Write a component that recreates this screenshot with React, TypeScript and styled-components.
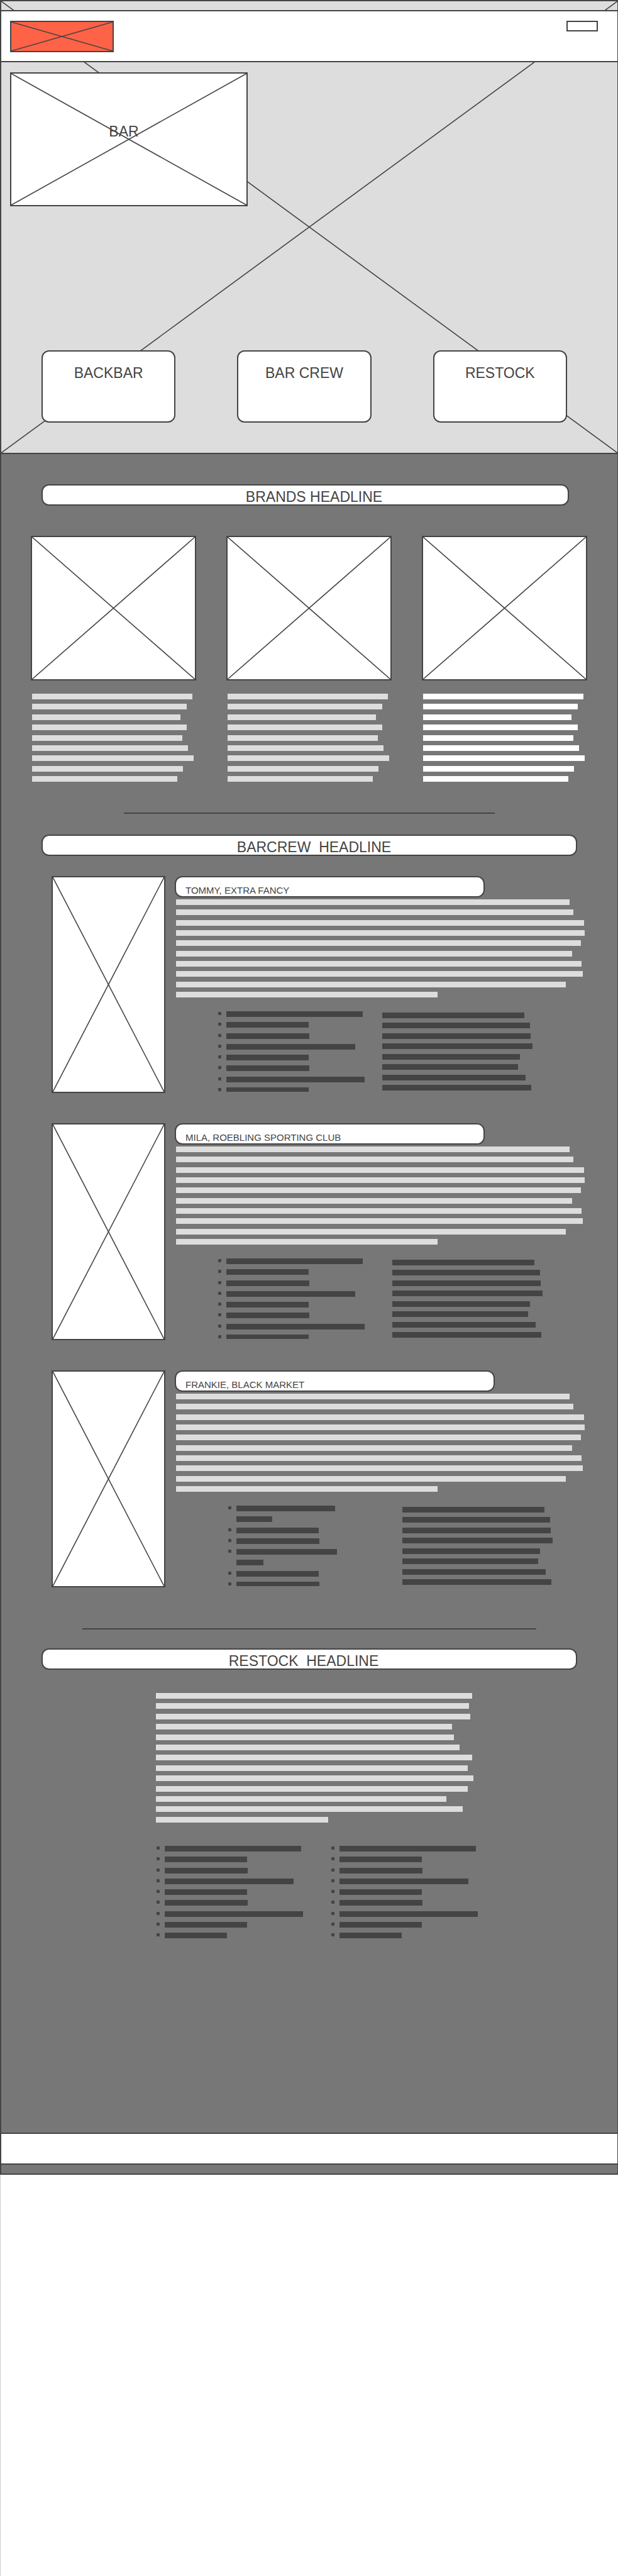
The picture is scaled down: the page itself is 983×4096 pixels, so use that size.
import React from 'react';
import styled, { createGlobalStyle } from 'styled-components';

const ink = '#444444';
const slate = '#777777';
const mist = '#dddddd';

const GlobalStyle = createGlobalStyle`
  *, *::before, *::after { box-sizing: border-box; }
  body {
    margin: 0;
    background: #ffffff;
    color: ${ink};
    font-family: "Liberation Sans", Arial, sans-serif;
    font-size: 23px;
    line-height: 28px;
  }
  h1, h2, h3, ul { margin: 0; padding: 0; font: inherit; }
  ul { list-style: none; }
`;

const Shell = styled.div`
  display: flex;
  flex-direction: column;
  min-height: 100vh;
`;

const Page = styled.div`
  border: solid ${ink};
  border-width: 0 1px 2px 2px;
  padding-bottom: 14px;
  background: ${slate};
`;

const Rest = styled.div`
  flex: 1;
  border-left: 1px solid #cccccc;
`;

const CrossSvg = styled.svg`
  position: absolute;
  inset: 0;
  width: 100%;
  height: 100%;
  stroke: ${ink};
  stroke-width: 1.6;
`;

function Cross() {
  return (
    <CrossSvg viewBox="0 0 100 100" preserveAspectRatio="none" aria-hidden="true">
      <line x1="0" y1="0" x2="100" y2="100" vectorEffect="non-scaling-stroke" />
      <line x1="100" y1="0" x2="0" y2="100" vectorEffect="non-scaling-stroke" />
    </CrossSvg>
  );
}

const Hero = styled.section`
  position: relative;
  border: solid ${ink};
  border-width: 2px 0;
  padding: 14px 0 48px;
  background: ${mist};
`;

const Header = styled.header`
  position: relative;
  display: flex;
  justify-content: space-between;
  align-items: flex-start;
  height: 83px;
  padding: 15px 31px 0 14px;
  border: solid ${ink};
  border-width: 2px 0;
  background: #ffffff;
`;

const Frame = styled.div<{ $fill?: string; $height?: number }>`
  position: relative;
  height: ${p => (p.$height ? `${p.$height}px` : 'auto')};
  border: 2px solid ${ink};
  background: ${p => p.$fill || '#ffffff'};
`;

const Logo = styled(Frame)`
  width: 165px;
`;

const MenuButton = styled.button`
  width: 50px;
  height: 17px;
  padding: 0;
  border: 2px solid ${ink};
  background: #ffffff;
`;

const BarCard = styled(Frame)`
  width: 378px;
  margin: 16px 0 0 14px;
  padding: 78px 16px 0 0;
  text-align: center;
`;

const Tiles = styled.nav`
  position: relative;
  display: grid;
  grid-template-columns: repeat(3, 1fr);
  gap: 98px;
  margin: 229px 80px 0 64px;
`;

const Tile = styled.a`
  height: 115px;
  padding-top: 20px;
  border: 2px solid ${ink};
  border-radius: 12px;
  background: #ffffff;
  color: inherit;
  text-align: center;
  text-decoration: none;
`;

const Headline = styled.h2<{ $top: number; $right?: number; $shift?: string }>`
  height: 34px;
  margin: ${p => p.$top}px ${p => p.$right ?? 64}px 0 64px;
  padding: ${p => p.$shift || '4px 0 0'};
  border: 2px solid ${ink};
  border-radius: 12px;
  background: #ffffff;
  text-align: center;
  white-space: pre;
`;

const Divider = styled.hr<{ $top: number; $side: number }>`
  height: 2px;
  margin: ${p => p.$top}px ${p => p.$side}px 0;
  border: 0;
  background: ${ink};
`;

const Brands = styled.div`
  display: grid;
  grid-template-columns: repeat(3, 1fr);
  gap: 48px;
  margin: 48px 48px 0 47px;
`;

const BrandCopy = styled.div`
  padding: 21px 2px 0;
`;

const LineStack = styled.div<{ $height: number }>`
  display: flex;
  flex-direction: column;
  justify-content: space-between;
  height: ${p => p.$height}px;
`;

const Line = styled.div<{ $share: number; $color: string }>`
  width: ${p => p.$share}%;
  height: 9px;
  background: ${p => p.$color};
`;

type LinesProps = { widths: number[]; full: number; height: number; color?: string };

function Lines({ widths, full, height, color = mist }: LinesProps) {
  return (
    <LineStack $height={height} aria-hidden="true">
      {widths.map((w, i) => (
        <Line key={i} $share={(w / full) * 100} $color={color} />
      ))}
    </LineStack>
  );
}

const BulletStack = styled.ul<{ $height: number }>`
  display: flex;
  flex-direction: column;
  justify-content: space-between;
  width: 241px;
  height: ${p => p.$height}px;
`;

const BulletItem = styled.li<{ $short: boolean }>`
  display: flex;
  gap: 8px;
  height: ${p => (p.$short ? 7 : 9)}px;
  overflow: hidden;
`;

const Dot = styled.span<{ $hidden: boolean }>`
  flex: none;
  width: 5px;
  height: 5px;
  margin-top: 1px;
  border-radius: 1px;
  background: ${p => (p.$hidden ? 'transparent' : ink)};
`;

const Track = styled.span`
  flex: 1;
`;

type BulletsProps = { widths: number[]; bare?: number[]; height: number; clipLast?: boolean };

function Bullets({ widths, bare = [], height, clipLast = false }: BulletsProps) {
  return (
    <BulletStack $height={height} aria-hidden="true">
      {widths.map((w, i) => (
        <BulletItem key={i} $short={clipLast && i === widths.length - 1}>
          <Dot $hidden={bare.includes(i)} />
          <Track>
            <Line $share={(w / 278) * 100} $color={ink} />
          </Track>
        </BulletItem>
      ))}
    </BulletStack>
  );
}

const Crew = styled.div`
  display: flex;
  flex-direction: column;
  gap: 48px;
  margin: 32px 50px 0 80px;
`;

const Member = styled.article`
  display: grid;
  grid-template-columns: 181px 1fr;
  gap: 15px;
`;

const MemberName = styled.h3<{ $width: number }>`
  width: ${p => p.$width}px;
  height: 34px;
  margin-bottom: 3px;
  padding: 12px 0 0 15px;
  border: 2px solid ${ink};
  border-radius: 12px;
  background: #ffffff;
  font-size: 15px;
  line-height: 18px;
`;

const MemberCopy = styled.div`
  padding-left: 2px;
`;

const MemberLists = styled.div<{ $indent: number; $gap: number }>`
  display: flex;
  gap: ${p => p.$gap}px;
  padding: 22px 0 0 ${p => p.$indent}px;
`;

const SideLines = styled.div`
  width: 244px;
  padding-top: 2px;
`;

const RestockCopy = styled.div`
  width: 505px;
  margin: 37px 0 0 246px;
`;

const RestockLists = styled.div`
  display: flex;
  gap: 37px;
  margin: 37px 0 0 247px;
`;

const Footer = styled.footer`
  height: 51px;
  margin-top: 309px;
  border: solid ${ink};
  border-width: 2px 0;
  background: #ffffff;
`;

const brandLines = [311, 300, 288, 300, 292, 302, 313, 293, 282];
const brandColors = [mist, mist, '#ffffff'];
const bioLines = [764, 772, 792, 793, 786, 769, 787, 790, 757, 508];
const sideLines = [276, 287, 288, 292, 268, 264, 278, 289];
const drinkBullets = [265, 160, 161, 250, 160, 161, 268, 160];
const restockLines = [614, 608, 610, 575, 578, 589, 614, 605, 616, 605, 563, 595, 334];
const restockBullets = [265, 160, 161, 250, 160, 161, 268, 160, 121];

const members = [
  { name: 'TOMMY, EXTRA FANCY', width: 493, indent: 69, gap: 20, bullets: drinkBullets, bare: [] as number[] },
  { name: 'MILA, ROEBLING SPORTING CLUB', width: 493, indent: 69, gap: 36, bullets: drinkBullets, bare: [] as number[] },
  {
    name: 'FRANKIE, BLACK MARKET',
    width: 509,
    indent: 85,
    gap: 36,
    bullets: [192, 70, 160, 161, 195, 52, 160, 161],
    bare: [1, 5],
  },
];

export default function App() {
  return (
    <Shell>
      <GlobalStyle />
      <Page>
        <Hero>
          <Cross />
          <Header>
            <Logo $fill="#ff6347" $height={50}>
              <Cross />
            </Logo>
            <MenuButton type="button" aria-label="Menu" />
          </Header>
          <BarCard $height={213}>
            <Cross />
            <h1>BAR</h1>
          </BarCard>
          <Tiles>
            <Tile href="#brands">BACKBAR</Tile>
            <Tile href="#barcrew">BAR CREW</Tile>
            <Tile href="#restock">RESTOCK</Tile>
          </Tiles>
        </Hero>

        <section id="brands">
          <Headline $top={48} $right={77} $shift="4px 0 0 28px">BRANDS HEADLINE</Headline>
          <Brands>
            {brandColors.map((color, i) => (
              <div key={i}>
                <Frame $height={230}>
                  <Cross />
                </Frame>
                <BrandCopy>
                  <Lines widths={brandLines} full={316} height={140} color={color} />
                </BrandCopy>
              </div>
            ))}
          </Brands>
        </section>

        <Divider $top={49} $side={195} />

        <section id="barcrew">
          <Headline $top={33} $shift="4px 0 0 15px">{'BARCREW  HEADLINE'}</Headline>
          <Crew>
            {members.map(m => (
              <Member key={m.name}>
                <Frame $height={345}>
                  <Cross />
                </Frame>
                <div>
                  <MemberName $width={m.width}>{m.name}</MemberName>
                  <MemberCopy>
                    <Lines widths={bioLines} full={796} height={156} />
                  </MemberCopy>
                  <MemberLists $indent={m.indent} $gap={m.gap}>
                    <Bullets widths={m.bullets} bare={m.bare} height={128} clipLast />
                    <SideLines>
                      <Lines widths={sideLines} full={298} height={124} color={ink} />
                    </SideLines>
                  </MemberLists>
                </div>
              </Member>
            ))}
          </Crew>
        </section>

        <Divider $top={65} $side={129} />

        <section id="restock">
          <Headline $top={30} $shift="4px 18px 0 0">{'RESTOCK  HEADLINE'}</Headline>
          <RestockCopy>
            <Lines widths={restockLines} full={616} height={206} />
          </RestockCopy>
          <RestockLists>
            <Bullets widths={restockBullets} height={147} />
            <Bullets widths={restockBullets} height={147} />
          </RestockLists>
        </section>

        <Footer />
      </Page>
      <Rest />
    </Shell>
  );
}
